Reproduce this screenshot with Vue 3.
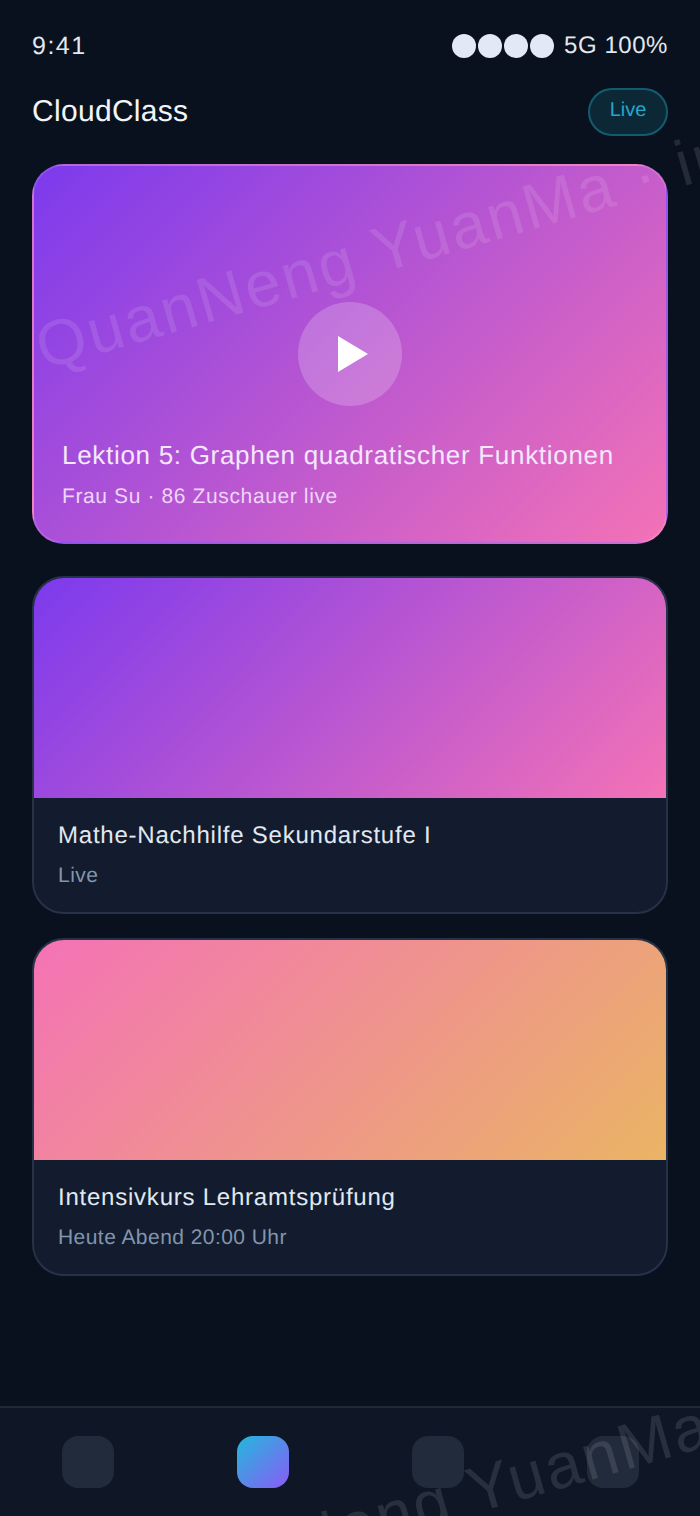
<template>
  <div class="screen">
    <div class="status">
      <span class="time">9:41</span>
      <div class="status-right">
        <i v-for="n in 4" :key="n" class="dot"></i>
        <span class="net">5G 100%</span>
      </div>
    </div>

    <header class="topbar">
      <h1>CloudClass</h1>
      <span class="pill">Live</span>
    </header>

    <main class="content">
      <section class="hero">
        <div class="play">
          <svg width="30" height="36" viewBox="0 0 30 36"><path d="M0 0L30 18L0 36Z" fill="#fff" /></svg>
        </div>
        <h2>Lektion 5: Graphen quadratischer Funktionen</h2>
        <p>Frau Su · 86 Zuschauer live</p>
      </section>

      <article v-for="c in courses" :key="c.title" class="card">
        <div class="thumb" :class="c.tone"></div>
        <div class="info">
          <h3>{{ c.title }}</h3>
          <p>{{ c.sub }}</p>
        </div>
      </article>
    </main>

    <nav class="tabs">
      <div v-for="n in 4" :key="n" class="tab" :class="{ active: n === 2 }"></div>
    </nav>

    <div class="mark mark-top">QuanNeng YuanMa · in</div>
    <div class="mark mark-bottom">QuanNeng YuanMa · in</div>
  </div>
</template>

<script setup>
const courses = [
  { title: "Mathe-Nachhilfe Sekundarstufe I", sub: "Live", tone: "violet" },
  { title: "Intensivkurs Lehramtsprüfung", sub: "Heute Abend 20:00 Uhr", tone: "peach" },
];
</script>

<style>
html,
body {
  margin: 0;
  background: #0a111e;
}
</style>

<style scoped>
.screen {
  position: relative;
  width: 700px;
  height: 1516px;
  overflow: hidden;
  display: flex;
  flex-direction: column;
  background: #0a111e;
  color: #e2e8f0;
  font-family: "Liberation Sans", Arial, sans-serif;
  text-rendering: geometricPrecision;
}
.status {
  display: flex;
  justify-content: space-between;
  align-items: center;
  height: 32px;
  margin-top: 30px;
  padding: 0 32px;
  line-height: 32px;
}
.time {
  font-size: 25px;
  letter-spacing: 1.5px;
}
.status-right {
  display: flex;
  align-items: center;
  gap: 2px;
}
.dot {
  width: 24px;
  height: 24px;
  border-radius: 50%;
  background: #e2e8f5;
}
.net {
  margin-left: 8px;
  font-size: 24px;
  letter-spacing: 0.55px;
}
.topbar {
  display: flex;
  justify-content: space-between;
  align-items: center;
  height: 48px;
  margin-top: 26px;
  padding: 0 32px;
}
.topbar h1 {
  margin: 0;
  font-size: 30px;
  font-weight: 400;
  letter-spacing: 0.3px;
  color: #f1f5f9;
}
.pill {
  box-sizing: border-box;
  width: 80px;
  height: 48px;
  padding-top: 7px;
  border: 2px solid rgba(34, 211, 238, 0.3);
  border-radius: 24px;
  background: rgba(34, 211, 238, 0.12);
  color: #22a8c8;
  font-size: 20px;
  line-height: 26px;
  text-align: center;
}
.content {
  display: flex;
  flex-direction: column;
  gap: 24px;
  margin-top: 28px;
  padding: 0 32px;
}
.hero {
  box-sizing: border-box;
  position: relative;
  display: flex;
  flex-direction: column;
  justify-content: flex-end;
  height: 380px;
  margin-bottom: 8px;
  padding: 0 28px 31px;
  border: 2px solid rgba(255, 255, 255, 0.12);
  border-radius: 32px;
  background: linear-gradient(135deg, #7c3aed, #f472b6);
}
.play {
  position: absolute;
  left: 50%;
  top: 50%;
  transform: translate(-50%, -50%);
  display: flex;
  align-items: center;
  justify-content: center;
  width: 104px;
  height: 104px;
  border-radius: 50%;
  background: rgba(255, 255, 255, 0.2);
}
.play svg {
  margin-left: 6px;
}
.hero h2 {
  margin: 0;
  font-size: 26px;
  line-height: 34px;
  font-weight: 400;
  letter-spacing: 0.7px;
  color: #f3e8ff;
}
.hero p {
  margin: 11px 0 0;
  font-size: 21px;
  line-height: 28px;
  letter-spacing: 0.62px;
  color: #eed5fb;
}
.card {
  box-sizing: border-box;
  height: 338px;
  overflow: hidden;
  border: 2px solid #263248;
  border-radius: 32px;
  background: #121c2e;
}
.thumb {
  height: 220px;
}
.violet {
  background: linear-gradient(135deg, #7c3aed, #f472b6);
}
.peach {
  background: linear-gradient(135deg, #f472b6, #eab464);
}
.info {
  padding: 21px 24px 20px;
}
.info h3 {
  margin: 0;
  font-size: 24px;
  line-height: 34px;
  font-weight: 400;
  letter-spacing: 0.77px;
  color: #e2e8f0;
}
.info p {
  margin: 9px 0 0;
  font-size: 21px;
  line-height: 28px;
  letter-spacing: 0.45px;
  color: #8395ad;
}
.tabs {
  box-sizing: border-box;
  position: absolute;
  left: 0;
  right: 0;
  bottom: 0;
  display: flex;
  justify-content: space-around;
  height: 110px;
  padding-top: 28px;
  border-top: 2px solid #1f2937;
  background: #0f1726;
}
.tab {
  width: 52px;
  height: 52px;
  border-radius: 16px;
  background: #222b3b;
}
.tab.active {
  background: linear-gradient(135deg, #22b8dc, #8b5cf6);
}
.mark {
  position: absolute;
  white-space: nowrap;
  font-size: 64px;
  line-height: 76px;
  letter-spacing: 2.6px;
  color: rgba(255, 255, 255, 0.11);
  transform: rotate(-16deg);
  transform-origin: left top;
  pointer-events: none;
}
.mark-top {
  left: 27px;
  top: 312px;
}
.mark-bottom {
  left: 122px;
  top: 1552px;
}
</style>
